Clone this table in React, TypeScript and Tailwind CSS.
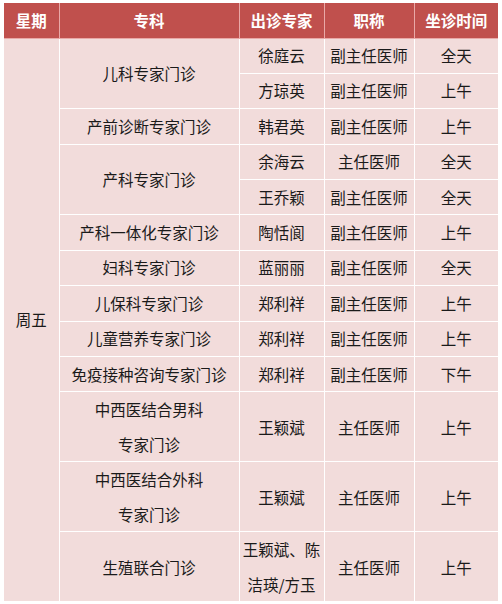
const rows: { dept: string; span: number; docs: { name: string; title: string; time: string }[] }[] = [
  { dept: '儿科专家门诊', span: 2, docs: [
    { name: '徐庭云', title: '副主任医师', time: '全天' },
    { name: '方琼英', title: '副主任医师', time: '上午' },
  ] },
  { dept: '产前诊断专家门诊', span: 1, docs: [{ name: '韩君英', title: '副主任医师', time: '上午' }] },
  { dept: '产科专家门诊', span: 2, docs: [
    { name: '余海云', title: '主任医师', time: '全天' },
    { name: '王乔颖', title: '副主任医师', time: '全天' },
  ] },
  { dept: '产科一体化专家门诊', span: 1, docs: [{ name: '陶恬阆', title: '副主任医师', time: '上午' }] },
  { dept: '妇科专家门诊', span: 1, docs: [{ name: '蓝丽丽', title: '副主任医师', time: '全天' }] },
  { dept: '儿保科专家门诊', span: 1, docs: [{ name: '郑利祥', title: '副主任医师', time: '上午' }] },
  { dept: '儿童营养专家门诊', span: 1, docs: [{ name: '郑利祥', title: '副主任医师', time: '上午' }] },
  { dept: '免疫接种咨询专家门诊', span: 1, docs: [{ name: '郑利祥', title: '副主任医师', time: '下午' }] },
]

// 两行高度的行
const tallRows = [
  { dept: ['中西医结合男科', '专家门诊'], name: ['王颖斌'], title: '主任医师', time: '上午' },
  { dept: ['中西医结合外科', '专家门诊'], name: ['王颖斌'], title: '主任医师', time: '上午' },
  { dept: ['生殖联合门诊'], name: ['王颖斌、陈', '洁瑛/方玉'], title: '主任医师', time: '上午' },
]

const td = 'border border-white text-center align-middle p-0'

export default function App() {
  let first = true
  return (
    <div className="bg-white w-[502px] h-[604px] pt-[3px] pl-[4px]" style={{ fontFamily: '"Noto Sans CJK SC", "Noto Sans", sans-serif' }}>
      <table className="table-fixed border-collapse w-[494px] text-[15.5px] text-[#1a1a1a]">
        <colgroup>
          <col className="w-[55px]" />
          <col className="w-[180px]" />
          <col className="w-[85px]" />
          <col className="w-[90px]" />
          <col className="w-[84px]" />
        </colgroup>
        <thead>
          <tr className="h-[35px] bg-[#c0504d] text-white font-bold">
            <th className="border border-[#e9a9a7] border-t-0 border-l-0">星期</th>
            <th className="border border-[#e9a9a7] border-t-0">专科</th>
            <th className="border border-[#e9a9a7] border-t-0">出诊专家</th>
            <th className="border border-[#e9a9a7] border-t-0">职称</th>
            <th className="border border-[#e9a9a7] border-t-0 border-r-0">坐诊时间</th>
          </tr>
        </thead>
        <tbody className="bg-[#f2dcdb]">
          {rows.map((r) =>
            r.docs.map((d, i) => {
              const showDay = first
              first = false
              return (
                <tr key={r.dept + i} className="h-[35.4px]">
                  {showDay && (
                    <td rowSpan={13} className={td + ' border-l-0 border-b-0'}>周五</td>
                  )}
                  {i === 0 && (
                    <td rowSpan={r.span} className={td}>{r.dept}</td>
                  )}
                  <td className={td}>{d.name}</td>
                  <td className={td}>{d.title}</td>
                  <td className={td + ' border-r-0'}>{d.time}</td>
                </tr>
              )
            })
          )}
          {tallRows.map((r, i) => (
            <tr key={i} className="h-[69.5px] leading-[34.5px]">
              <td className={td + (i === 2 ? ' border-b-0' : '')}>
                {r.dept.map((t) => <div key={t}>{t}</div>)}
              </td>
              <td className={td + (i === 2 ? ' border-b-0' : '')}>
                {r.name.map((t) => <div key={t}>{t}</div>)}
              </td>
              <td className={td + (i === 2 ? ' border-b-0' : '')}>{r.title}</td>
              <td className={td + ' border-r-0' + (i === 2 ? ' border-b-0' : '')}>{r.time}</td>
            </tr>
          ))}
        </tbody>
      </table>
    </div>
  )
}
